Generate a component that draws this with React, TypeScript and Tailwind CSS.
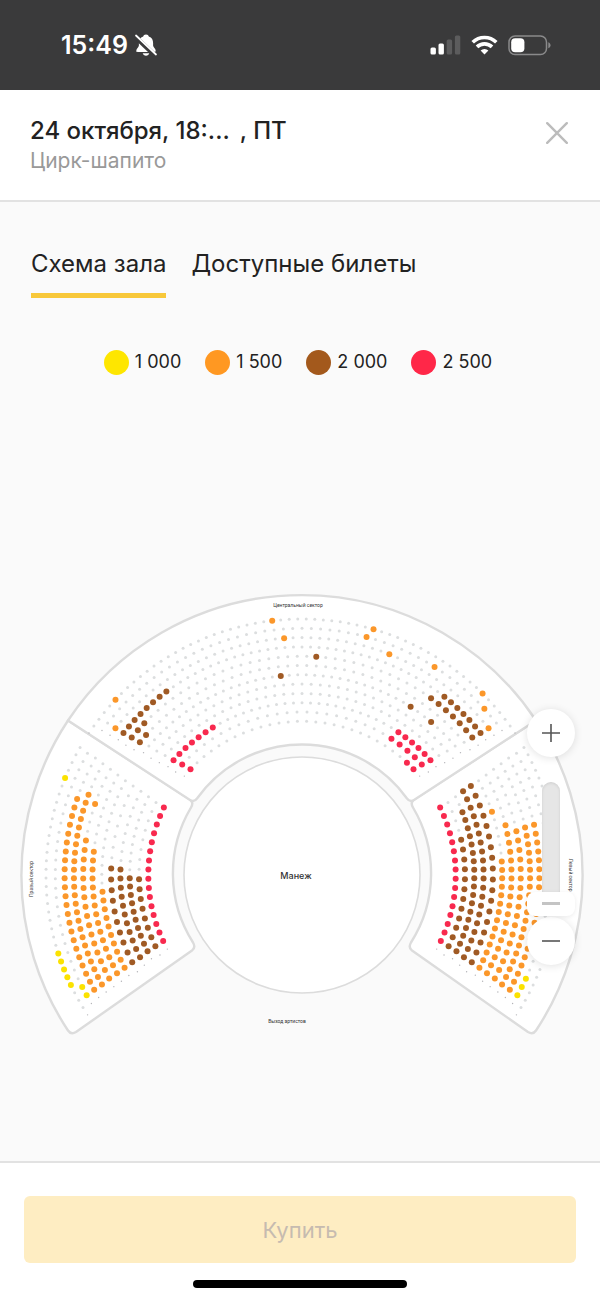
import React, { useState } from 'react';

type Price = 'yellow' | 'orange' | 'brown' | 'red';

// [first seat, last seat, price]
type Range = [number, number, Price];

interface Row {
  radius: number;
  from: number; // degrees
  to: number;
  gaps: number; // seats in the row minus one
  sold: Range[];
}

const FILLS: Record<Price, string> = {
  yellow: '#fbe200',
  orange: '#fb972a',
  brown: '#a05a24',
  red: '#f8294e',
};

const LEGEND = [
  { label: '1 000', dot: 'bg-[#fee600]' },
  { label: '1 500', dot: 'bg-[#ff9822]' },
  { label: '2 000', dot: 'bg-[#a3591c]' },
  { label: '2 500', dot: 'bg-[#ff2748]' },
];

const CX = 302;
const CY = 295;

// Side sectors: angles are measured from the horizontal axis, bottom seat first
const SIDE_BOTTOM = [25.4, 25.9, 26.3, 26.9, 27.2, 27.6, 28, 28.2, 28.7, 28.9, 29.2, 31.2];
const SIDE_TOP = [26, 26.4, 27, 27.5, 27.8, 28.1, 28.5, 28.9, 29.2, 29.5, 29.6, 29.9];
const LEFT_GAPS = [15, 15, 19, 19, 17, 22, 23, 23, 27, 27, 27, 32];
const RIGHT_GAPS = [15, 15, 19, 19, 17, 23, 23, 23, 27, 27, 27, 32];

const LEFT_SEATS: Range[][] = [
  [[0, 15, 'red']],
  [[0, 7, 'brown']],
  [[0, 9, 'brown']],
  [[0, 10, 'brown']],
  [[0, 9, 'brown']],
  [[0, 9, 'orange']],
  [[0, 14, 'orange']],
  [[0, 15, 'orange'], [19, 19, 'orange']],
  [[0, 23, 'orange']],
  [[0, 22, 'orange']],
  [[0, 1, 'yellow']],
  [[3, 7, 'yellow'], [28, 28, 'yellow']],
];

const RIGHT_SEATS: Range[][] = [
  [[0, 15, 'red']],
  [[0, 11, 'brown']],
  [[0, 17, 'brown']],
  [[0, 19, 'brown']],
  [[0, 17, 'brown']],
  [[0, 13, 'orange'], [19, 19, 'orange']],
  [[0, 17, 'orange']],
  [[0, 16, 'orange']],
  [[0, 19, 'orange']],
  [[0, 19, 'orange']],
  [[0, 2, 'yellow']],
  [],
];

// Central sector: half of the opening angle, leftmost seat first
const CENTER_HALF = [46.5, 47.3, 48.2, 48.9, 49.5, 49.9, 50.7, 51.1, 51.5, 51.8, 52, 54.4];
const CENTER_GAPS = [27, 27, 34, 34, 36, 41, 39, 41, 48, 48, 48, 57];

const CENTER_SEATS: Range[][] = [
  [[0, 0, 'red'], [26, 27, 'red']],
  [[0, 0, 'red'], [23, 27, 'red']],
  [[0, 6, 'red'], [29, 34, 'red']],
  [],
  [],
  [[18, 18, 'brown'], [34, 34, 'brown'], [37, 37, 'brown']],
  [[0, 1, 'brown']],
  [[0, 2, 'brown'], [22, 22, 'brown'], [35, 41, 'brown']],
  [[0, 7, 'brown'], [42, 48, 'brown']],
  [[0, 0, 'orange'], [22, 22, 'orange'], [34, 34, 'orange'], [48, 48, 'orange']],
  [[31, 31, 'orange'], [39, 39, 'orange'], [46, 46, 'orange']],
  [[4, 4, 'orange'], [25, 25, 'orange'], [37, 37, 'orange'], [52, 52, 'orange']],
];

const rowRadius = (row: number) => 153.7 + row * 9.3;

const leftRows: Row[] = LEFT_SEATS.map((sold, i) => ({
  radius: rowRadius(i), from: 180 - SIDE_BOTTOM[i], to: 180 + SIDE_TOP[i], gaps: LEFT_GAPS[i], sold,
}));

const rightRows: Row[] = RIGHT_SEATS.map((sold, i) => ({
  radius: rowRadius(i), from: SIDE_BOTTOM[i], to: -SIDE_TOP[i], gaps: RIGHT_GAPS[i], sold,
}));

const centerRows: Row[] = CENTER_SEATS.map((sold, i) => ({
  radius: rowRadius(i), from: 270 - CENTER_HALF[i], to: 270 + CENTER_HALF[i], gaps: CENTER_GAPS[i], sold,
}));

const point = (radius: number, deg: number) => {
  const a = (deg * Math.PI) / 180;
  return { x: CX + radius * Math.cos(a), y: CY + radius * Math.sin(a) };
};

const SeatRow: React.FC<{ row: Row; bothEnds?: boolean }> = ({ row, bothEnds }) => {
  const step = (row.to - row.from) / row.gaps;
  const marks = bothEnds ? [-1, row.gaps + 1] : [-1];

  return (
    <g>
      {Array.from({ length: row.gaps + 1 }, (_, i) => {
        const { x, y } = point(row.radius, row.from + step * i);
        const range = row.sold.find(([a, b]) => i >= a && i <= b);
        return (
          <circle key={i} cx={x} cy={y} r={range ? 3 : 1.5} fill={range ? FILLS[range[2]] : '#dcdedf'} />
        );
      })}
      {/* Row number marks */}
      {marks.map(i => {
        const { x, y } = point(row.radius, row.from + step * i);
        return <circle key={i} cx={x} cy={y} r={0.7} fill="#b4b4b8" />;
      })}
    </g>
  );
};

const SIDE_PATH =
  'M68 140.5 L190 219.5 Q194 222.5 191 227.5 A129 129 0 0 0 193 362.5 Q196 367.5 192 370.5 L76 452 Q71 455 68 450.5 A281 281 0 0 1 68 140.5 Z';
const CENTER_PATH =
  'M68 140.5 A281 281 0 0 1 536 140.5 L414 220 Q410 222.5 407 218.5 A129 129 0 0 0 197 218.5 Q194 222.5 190 220 Z';

const HallMap: React.FC = () => (
  <svg viewBox="0 0 600 470" className="block w-full" role="img" aria-label="Схема зала">
    <g fill="#fff" stroke="#dcdcdc" strokeWidth="2.4" strokeLinejoin="round">
      <path d={SIDE_PATH} />
      <path d={SIDE_PATH} transform="translate(604 0) scale(-1 1)" />
      <path d={CENTER_PATH} />
      <circle cx={CX} cy={CY} r="118" strokeWidth="1.6" />
    </g>
    {leftRows.map((row, i) => <SeatRow key={i} row={row} />)}
    {rightRows.map((row, i) => <SeatRow key={i} row={row} />)}
    {centerRows.map((row, i) => <SeatRow key={i} row={row} bothEnds />)}
    <g fill="#333" textAnchor="middle" className="font-['Roboto',sans-serif]">
      <text x="298" y="27" fontSize="5">Центральный сектор</text>
      <text x="296" y="299" fontSize="9" fontWeight="500" className="font-['Inter',sans-serif]">Манеж</text>
      <text x="287" y="443" fontSize="5">Выход артистов</text>
      <text transform="translate(33 299) rotate(-90)" fontSize="5">Правый сектор</text>
      <text transform="translate(569 295) rotate(90)" fontSize="5">Левый сектор</text>
    </g>
  </svg>
);

const StatusBar: React.FC = () => (
  <div className="flex h-[90px] shrink-0 items-center justify-between bg-[#3a3a3b] pl-[61px] pr-[49px] text-white">
    <div className="flex items-center gap-[6px]">
      <span className="text-[25px] font-semibold leading-8">15:49</span>
      <svg width="24" height="24" viewBox="0 0 24 24" fill="#fff">
        <path d="M12 1.5c-1.600 0-2.500.9-2.800 2C6 4.600 4.900 7.200 4.900 10v2.500c0 1.800-2.600 3.300-2.600 5.200 0 .8.500 1.200 1.300 1.200h16.800c.8 0 1.300-.4 1.300-1.200 0-1.900-2.600-3.400-2.600-5.200V10c0-2.800-1.100-5.400-4.300-6.500-.3-1.100-1.200-2-2.800-2Z" />
        <path d="M8.700 20.200h6.600c-.4 1.600-1.700 2.500-3.300 2.500s-2.900-.9-3.300-2.500Z" />
        <path d="M1.500 4 21.500 23" stroke="#3a3a3b" strokeWidth="4.500" />
        <path d="M2 2.500 22 21.500" stroke="#fff" strokeWidth="1.800" strokeLinecap="round" />
      </svg>
    </div>
    <div className="flex items-center gap-[10px]">
      <svg width="31" height="20" viewBox="0 0 31 20" fill="#fff">
        <rect x="0.500" y="12.500" width="5.400" height="7" rx="1.500" />
        <rect x="8.500" y="8.500" width="5.400" height="11" rx="1.500" />
        <rect x="16.700" y="4.500" width="5.400" height="15" rx="1.500" fill="#5c5c5d" />
        <rect x="24.900" y="0.500" width="5.400" height="19" rx="1.500" fill="#5c5c5d" />
      </svg>
      <svg width="27" height="20" viewBox="0 0 27 20" fill="none" stroke="#fff" strokeWidth="3.600">
        <path d="M1.700 7.300a16.800 16.800 0 0 1 23.600 0" />
        <path d="M6 11.900a10.700 10.700 0 0 1 15 0" />
        <path d="M13.500 19.500 9.600 15.500a5.600 5.600 0 0 1 7.800 0Z" fill="#fff" stroke="none" />
      </svg>
      <svg width="43" height="21" viewBox="0 0 43 21">
        <rect x="1" y="1" width="37.500" height="18.600" rx="6" fill="none" stroke="#8a8a8b" strokeWidth="1.500" />
        <rect x="3.200" y="3.300" width="13.200" height="14" rx="4" fill="#fff" />
        <path d="M40.300 7.300c1.400.6 2.200 1.700 2.200 3s-.8 2.400-2.200 3Z" fill="#8a8a8b" />
      </svg>
    </div>
  </div>
);

const App: React.FC = () => {
  const [tab, setTab] = useState<'map' | 'tickets'>('map');
  const [zoom, setZoom] = useState(0);

  const tabClass = (active: boolean) =>
    active
      ? 'border-b-[5px] border-[#f8c83a] pb-[11px] text-2xl leading-9'
      : 'border-b-[5px] border-transparent pb-[11px] text-2xl leading-9';

  return (
    <div className="flex min-h-screen flex-col bg-[#fafafa] font-['Inter',sans-serif] text-[#222]">
      <StatusBar />

      {/* Header */}
      <header className="flex items-start justify-between border-b-2 border-[#e2e2e2] bg-white pb-[25px] pl-[30px] pr-7 pt-[25px]">
        <div>
          <h1 className="flex gap-[10px] text-2xl font-medium leading-8">
            <span>24 октября, 18:...</span>
            <span>, ПТ</span>
          </h1>
          <p className="text-[21px] leading-7 text-[#999]">Цирк-шапито</p>
        </div>
        <button type="button" aria-label="Закрыть" className="mt-[3px] p-1">
          <svg width="22" height="22" viewBox="0 0 22 22" stroke="#bcbcbc" strokeWidth="2.400" strokeLinecap="round">
            <path d="M1.200 1.200 20.800 20.800M20.800 1.200 1.200 20.800" />
          </svg>
        </button>
      </header>

      <main className="flex grow flex-col">
        <nav className="flex gap-[25px] pl-[31px] pt-11">
          <button type="button" className={tabClass(tab === 'map')} onClick={() => setTab('map')}>Схема зала</button>
          <button type="button" className={tabClass(tab === 'tickets')} onClick={() => setTab('tickets')}>Доступные билеты</button>
        </nav>

        {/* Prices */}
        <ul className="flex justify-center gap-6 pr-1 pt-12">
          {LEGEND.map(item => (
            <li key={item.label} className="flex items-center gap-[6px] text-lg leading-8">
              <span className={`size-[25px] rounded-full ${item.dot}`} />
              {item.label}
            </li>
          ))}
        </ul>

        <div className="my-auto pb-[6px] pt-24">
          <div className="relative">
            <HallMap />

            {/* Zoom controls */}
            <div className="absolute right-[25px] top-[129px] flex flex-col items-center">
              <button
                type="button"
                aria-label="Увеличить"
                className="flex size-12 items-center justify-center rounded-full bg-white shadow-[0_1px_8px_rgba(0,0,0,0.12)]"
                onClick={() => setZoom(z => Math.min(100, z + 10))}
              >
                <svg width="20" height="20" viewBox="0 0 20 20" stroke="#555" strokeWidth="1.600">
                  <path d="M1 10h18M10 1v18" />
                </svg>
              </button>
              <div className="relative z-10 mt-[25px] flex h-[134px] w-12 justify-center">
                <div className="h-[121px] w-[18px] rounded-t-full bg-[#e6e6e6] shadow-[inset_0_1px_3px_rgba(0,0,0,0.1)]" />
                <input
                  type="range"
                  aria-label="Масштаб"
                  min={0}
                  max={100}
                  value={zoom}
                  onChange={e => setZoom(Number(e.target.value))}
                  className="absolute inset-0 h-full w-full appearance-none bg-transparent [direction:rtl] [writing-mode:vertical-lr] [&::-webkit-slider-thumb]:h-6 [&::-webkit-slider-thumb]:w-12 [&::-webkit-slider-thumb]:appearance-none [&::-webkit-slider-thumb]:rounded-lg [&::-webkit-slider-thumb]:bg-white [&::-webkit-slider-thumb]:bg-[linear-gradient(#c4c4c4,#c4c4c4)] [&::-webkit-slider-thumb]:bg-[length:18px_3px] [&::-webkit-slider-thumb]:bg-center [&::-webkit-slider-thumb]:bg-no-repeat [&::-webkit-slider-thumb]:shadow-[0_1px_4px_rgba(0,0,0,0.08)]"
                />
              </div>
              <button
                type="button"
                aria-label="Уменьшить"
                className="mt-px flex size-12 items-center justify-center rounded-full bg-white shadow-[0_1px_8px_rgba(0,0,0,0.12)]"
                onClick={() => setZoom(z => Math.max(0, z - 10))}
              >
                <svg width="20" height="20" viewBox="0 0 20 20" stroke="#555" strokeWidth="1.600">
                  <path d="M1 10h18" />
                </svg>
              </button>
            </div>
          </div>
        </div>
      </main>

      {/* Bottom bar */}
      <footer className="flex flex-col items-center border-t-2 border-[#e2e2e2] bg-white px-6 pb-3 pt-[33px]">
        <button type="button" disabled className="h-[67px] w-full rounded-md bg-[#feedc2] text-[22px] leading-8 text-[#c6bbb0]">
          Купить
        </button>
        <div className="mt-[17px] h-2 w-[214px] rounded-full bg-black" />
      </footer>
    </div>
  );
};

export default App;
